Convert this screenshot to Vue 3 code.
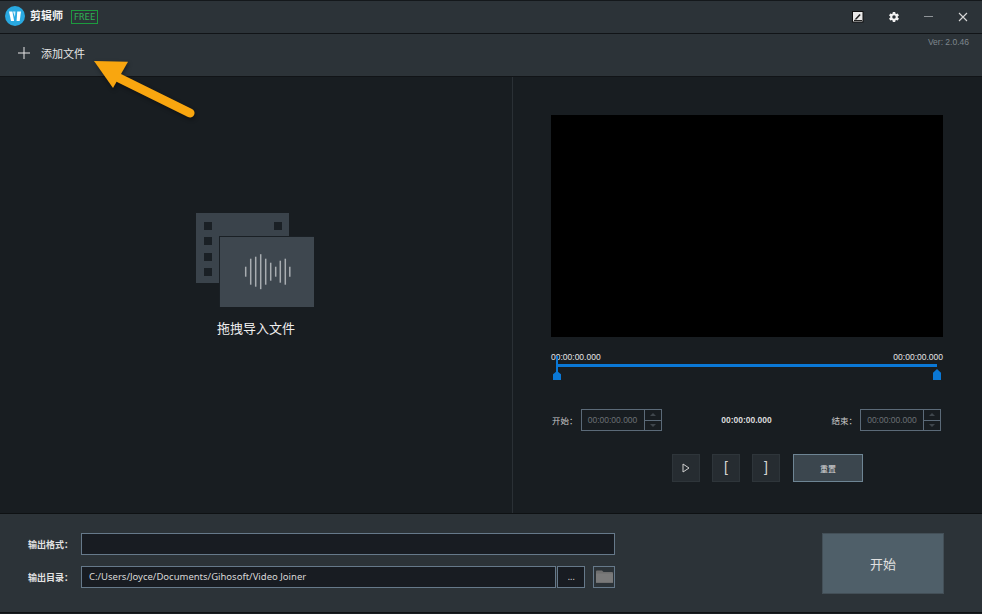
<template>
  <div class="app">
    <header class="titlebar">
      <div class="brand">
        <svg class="logo" width="20" height="20" viewBox="0 0 20 20">
          <circle cx="10" cy="10" r="10" fill="#29a9e1" />
          <path d="M4 5.500h3.400l1.700 9.500H6z" fill="#fff" />
          <path d="M8 5.500h2.500l-.6 5.500z" fill="#d5f0fb" />
          <path d="M12.200 5.500H16l-1.300 9.500h-3.100z" fill="#fff" />
        </svg>
        <span class="brand-name">剪辑师</span>
        <span class="free">FREE</span>
      </div>
      <div class="win-actions">
        <svg width="12" height="12" viewBox="0 0 12 12">
          <rect x="0.5" y="0.5" width="10.500" height="10.500" fill="#e8e8e8" stroke="#111" />
          <path d="M2.500 8.500 7.500 3l1.200 1L4.500 8.500z" fill="#222" />
          <path d="M2 9.500h8" stroke="#222" />
        </svg>
        <svg width="12" height="12" viewBox="0 0 24 24">
          <path fill="#f2f2f2" d="M19.400 13a7.600 7.600 0 0 0 0-2l2.500-1.900-2.400-4.200-3 1.200a7.500 7.500 0 0 0-1.700-1L14.400 1.900H9.600l-.4 3.200a7.500 7.500 0 0 0-1.700 1l-3-1.200-2.400 4.200L4.600 11a7.600 7.600 0 0 0 0 2l-2.500 1.900 2.400 4.200 3-1.200a7.500 7.500 0 0 0 1.700 1l.4 3.200h4.800l.4-3.200a7.500 7.500 0 0 0 1.700-1l3 1.200 2.400-4.200zM12 15.500a3.500 3.500 0 1 1 0-7 3.500 3.500 0 0 1 0 7z" />
        </svg>
        <span class="minimize"></span>
        <svg width="10" height="10" viewBox="0 0 10 10">
          <path d="M1 1l8 8M9 1l-8 8" stroke="#d8d8d8" stroke-width="1.100" fill="none" />
        </svg>
      </div>
    </header>

    <div class="toolbar">
      <button class="add-btn">
        <svg width="12" height="12" viewBox="0 0 12 12">
          <path d="M6 0v12M0 6h12" stroke="#e6e6e6" stroke-width="1" />
        </svg>
        <span class="add-label">添加文件</span>
      </button>
      <span class="version">Ver: 2.0.46</span>
    </div>

    <main class="main">
      <section class="file-pane">
        <div class="drop">
          <svg class="drop-icon" width="118" height="94" viewBox="0 0 118 94">
            <rect x="0" y="0" width="93" height="70" fill="#3a434b" />
            <rect x="8" y="9" width="8" height="8" fill="#1a2025" />
            <rect x="8" y="24" width="8" height="8" fill="#1a2025" />
            <rect x="8" y="40" width="8" height="8" fill="#1a2025" />
            <rect x="8" y="55" width="8" height="8" fill="#1a2025" />
            <rect x="78" y="9" width="8" height="8" fill="#1a2025" />
            <rect x="23" y="23" width="95" height="71" fill="#1a2025" />
            <rect x="24" y="24" width="94" height="70" fill="#3e474f" />
            <g stroke="#a8adb1" stroke-width="1.500">
              <path v-for="bar in waveBars" :key="bar.x" :d="`M${bar.x} ${58.700 - bar.h}v${bar.h * 2}`" />
            </g>
          </svg>
          <span class="drop-text">拖拽导入文件</span>
        </div>
      </section>

      <section class="preview-pane">
        <div class="video"></div>
        <div class="times">
          <span>00:00:00.000</span>
          <span>00:00:00.000</span>
        </div>
        <div class="track">
          <span class="handle handle-left"></span>
          <span class="handle handle-right"></span>
        </div>
        <div class="range-row">
          <div class="range-field">
            <label>开始：</label>
            <div class="spin">
              <span class="spin-value">00:00:00.000</span>
              <div class="spin-btns">
                <span><i class="tri up"></i></span>
                <span><i class="tri down"></i></span>
              </div>
            </div>
          </div>
          <span class="duration">00:00:00.000</span>
          <div class="range-field">
            <label>结束：</label>
            <div class="spin">
              <span class="spin-value">00:00:00.000</span>
              <div class="spin-btns">
                <span><i class="tri up"></i></span>
                <span><i class="tri down"></i></span>
              </div>
            </div>
          </div>
        </div>
        <div class="controls">
          <button class="ctl">
            <svg width="8" height="10" viewBox="0 0 8 10">
              <path d="M1 1l6 4-6 4z" fill="none" stroke="#d0d0d0" />
            </svg>
          </button>
          <button class="ctl bracket">[</button>
          <button class="ctl bracket">]</button>
          <button class="reset">重置</button>
        </div>
      </section>
    </main>

    <footer class="footer">
      <div class="out-form">
        <div class="out-row">
          <label>输出格式：</label>
          <div class="out-input"></div>
        </div>
        <div class="out-row">
          <label>输出目录：</label>
          <div class="out-input path">C:/Users/Joyce/Documents/Gihosoft/Video Joiner</div>
          <div class="dots">...</div>
          <div class="folder">
            <svg width="17" height="14" viewBox="0 0 17 14">
              <path d="M0 1.500a1 1 0 0 1 1-1h5l1.500 1.500H16a1 1 0 0 1 1 1V13H0z" fill="#6f6f6f" />
              <rect x="0" y="3.500" width="17" height="8.500" fill="#7a7a7a" />
            </svg>
          </div>
        </div>
      </div>
      <button class="start">开始</button>
    </footer>

    <svg class="arrow" width="106" height="64" viewBox="0 0 106 64">
      <path d="M98 55 27 20" stroke="#f9a60f" stroke-width="9" stroke-linecap="round" fill="none" />
      <path d="M2 3l34 .7L21 30z" fill="#f9a60f" />
    </svg>
  </div>
</template>

<script setup>
const waveBars = [
  { x: 49.700, h: 5 },
  { x: 54.700, h: 13 },
  { x: 59.700, h: 15 },
  { x: 64.700, h: 17.500 },
  { x: 69.700, h: 13 },
  { x: 74.700, h: 9 },
  { x: 79.700, h: 5 },
  { x: 84.300, h: 11 },
  { x: 89.300, h: 13 },
  { x: 93.800, h: 5 }
]
</script>

<style>
html,
body {
  margin: 0;
  background: #181d21;
}
</style>

<style scoped>
.app {
  position: relative;
  width: 982px;
  height: 614px;
  overflow: hidden;
  display: flex;
  flex-direction: column;
  background: #181d21;
  color: #e0e0e0;
  font-family: "Liberation Sans", "Noto Sans CJK SC", sans-serif;
  font-size: 10px;
}

button {
  font-family: inherit;
  padding: 0;
  margin: 0;
}

.titlebar {
  height: 32px;
  flex: none;
  display: flex;
  align-items: center;
  justify-content: space-between;
  background: #2c3338;
  border-top: 1px solid #14181b;
  border-bottom: 1px solid #111417;
}

.brand {
  display: flex;
  align-items: center;
  padding-left: 5px;
}

.logo {
  margin-top: -3px;
}

.brand-name {
  margin-left: 5px;
  margin-top: -5px;
  font-size: 11px;
  font-weight: 700;
  color: #f2f2f2;
}

.free {
  margin-left: 8px;
  width: 25px;
  height: 12px;
  border: 1px solid #1c9a3e;
  color: #2fb053;
  font-family: "DejaVu Sans Mono", monospace;
  font-size: 9px;
  line-height: 12px;
  text-align: center;
}

.win-actions {
  display: flex;
  align-items: center;
  gap: 24px;
  padding-right: 14px;
  margin-top: -1px;
}

.minimize {
  width: 9px;
  height: 1.500px;
  margin-right: 1px;
  background: #8f9498;
}

.toolbar {
  position: relative;
  height: 42px;
  flex: none;
  display: flex;
  align-items: center;
  background: #2c3338;
  border-bottom: 1px solid #111417;
}

.add-btn {
  display: flex;
  align-items: center;
  gap: 11px;
  margin-left: 18px;
  margin-top: -4px;
  background: none;
  border: 0;
  color: #e6e6e6;
  font-size: 11px;
}

.add-label {
  margin-top: -1px;
}

.version {
  position: absolute;
  top: 3px;
  right: 13px;
  font-size: 8.500px;
  color: #7f878d;
}

.main {
  flex: 1;
  display: flex;
  min-height: 0;
}

.file-pane {
  width: 512px;
  flex: none;
  display: flex;
  justify-content: center;
  border-right: 1px solid #2a3035;
  background: #181d21;
}

.drop {
  display: flex;
  flex-direction: column;
  align-items: center;
  margin-top: 136px;
  margin-left: -2px;
}

.drop-text {
  margin-top: 12px;
  margin-left: 2px;
  font-size: 13px;
  line-height: 19px;
  color: #eeeeee;
}

.preview-pane {
  flex: 1;
  padding: 38px 39px 0 38px;
  box-sizing: border-box;
}

.video {
  height: 222px;
  background: #000;
}

.times {
  display: flex;
  justify-content: space-between;
  margin-top: 14px;
  font-size: 8.500px;
  line-height: 12px;
  color: #e4e4e4;
}

.track {
  position: relative;
  height: 3px;
  margin: 1px 6px 0;
  background: #0a78d6;
}

.track::before {
  content: "";
  position: absolute;
  left: -1px;
  top: -8px;
  width: 2px;
  height: 18px;
  background: #0a78d6;
}

.handle {
  position: absolute;
  top: 5px;
  width: 8px;
  height: 11px;
  background: #0a78d6;
  clip-path: polygon(50% 0, 100% 35%, 100% 100%, 0 100%, 0 35%);
}

.handle-left {
  left: -4px;
  top: 7px;
  height: 9px;
}

.handle-right {
  right: -4px;
}

.range-row {
  display: flex;
  align-items: center;
  justify-content: space-between;
  margin-top: 42px;
  padding: 0 2px 0 1px;
}

.range-field {
  display: flex;
  align-items: center;
  gap: 3px;
}

.range-field label {
  font-size: 8.500px;
  color: #c8c8c8;
}

.spin {
  width: 81px;
  height: 22px;
  box-sizing: border-box;
  display: flex;
  border: 1px solid #5b6a78;
  background: #181d21;
}

.spin-value {
  flex: 1;
  text-align: center;
  line-height: 20px;
  font-size: 8.500px;
  color: #6b7074;
}

.spin-btns {
  width: 16px;
  display: flex;
  flex-direction: column;
  border-left: 1px solid #5b6a78;
}

.spin-btns span {
  flex: 1;
  display: flex;
  align-items: center;
  justify-content: center;
}

.spin-btns span + span {
  border-top: 1px solid #5b6a78;
}

.tri {
  width: 0;
  height: 0;
  border-left: 3px solid transparent;
  border-right: 3px solid transparent;
}

.tri.up {
  border-bottom: 3px solid #3f464c;
}

.tri.down {
  border-top: 3px solid #3f464c;
}

.duration {
  font-size: 8.500px;
  font-weight: 700;
  color: #dcdcdc;
}

.controls {
  display: flex;
  align-items: center;
  gap: 12px;
  margin-top: 23px;
  padding-left: 121px;
}

.ctl {
  width: 28px;
  height: 28px;
  display: flex;
  align-items: center;
  justify-content: center;
  background: #262c31;
  border: 1px solid #2e353a;
  color: #d4d4d4;
}

.bracket {
  font-size: 14px;
  padding-bottom: 3px;
}

.reset {
  width: 70px;
  height: 28px;
  margin-left: 1px;
  background: #3b464e;
  border: 1px solid #6e8594;
  color: #d8d8d8;
  font-size: 8px;
}

.footer {
  flex: none;
  height: 100px;
  margin-bottom: 1px;
  box-sizing: border-box;
  display: flex;
  justify-content: space-between;
  background: #2c3338;
  border-top: 1px solid #0e1113;
  border-bottom: 1px solid #0e1113;
}

.out-form {
  display: flex;
  flex-direction: column;
  gap: 11px;
  padding-top: 19px;
}

.out-row {
  display: flex;
  align-items: center;
  height: 22px;
}

.out-row label {
  width: 53px;
  margin-left: 28px;
  font-size: 9px;
  font-weight: 700;
  color: #e2e2e2;
}

.out-input {
  width: 534px;
  height: 22px;
  box-sizing: border-box;
  background: #181c22;
  border: 1px solid #66798a;
  font-family: "Noto Sans", "Liberation Sans", sans-serif;
  font-size: 9.500px;
  line-height: 20px;
  color: #d8d8d8;
}

.out-input.path {
  width: 475px;
  padding-left: 7px;
}

.dots {
  width: 28px;
  height: 22px;
  box-sizing: border-box;
  margin-left: 1px;
  background: #181c22;
  border: 1px solid #66798a;
  text-align: center;
  line-height: 20px;
  font-size: 10px;
  letter-spacing: -0.4px;
  color: #c8c8c8;
}

.folder {
  width: 22px;
  height: 22px;
  box-sizing: border-box;
  margin-left: 8px;
  display: flex;
  align-items: center;
  justify-content: center;
  background: #2c3338;
  border: 1px solid #66798a;
}

.start {
  width: 122px;
  height: 61px;
  margin: 19px 38px 0 0;
  background: #4f5f69;
  border: 1px solid #434f57;
  color: #e0e0e0;
  font-size: 13px;
}

.arrow {
  position: absolute;
  left: 92px;
  top: 58px;
  filter: drop-shadow(1px 2px 2px rgba(0, 0, 0, 0.4));
}
</style>
